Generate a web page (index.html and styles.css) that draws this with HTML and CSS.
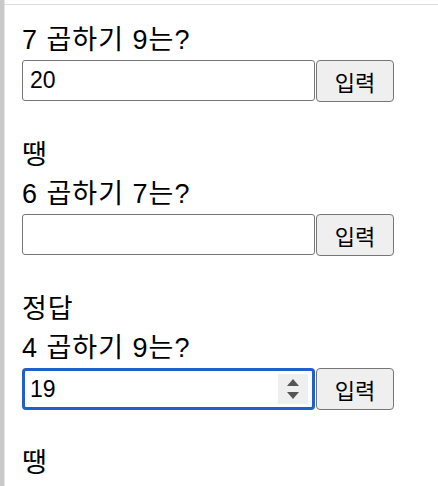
FILE: index.html
```html
<!DOCTYPE html>
<html lang="ko">

<head>
    <meta charset="UTF-8">
    <title>구구단</title>
    <link rel="stylesheet" href="styles.css">
</head>

<body>
    <div class="frame">
        <div class="quiz">
            <div class="question">7 곱하기 9는?</div>
            <form class="row">
                <div class="field"><input type="text" value="20"></div>
                <button type="button">입력</button>
            </form>
        </div>
        <div class="quiz">
            <div class="result">땡</div>
            <div class="question">6 곱하기 7는?</div>
            <form class="row">
                <div class="field"><input type="text" value=""></div>
                <button type="button">입력</button>
            </form>
        </div>
        <div class="quiz">
            <div class="result">정답</div>
            <div class="question">4 곱하기 9는?</div>
            <form class="row">
                <div class="field focused">
                    <input type="text" value="19">
                    <span class="spin">
                        <svg width="14" height="22" viewBox="0 0 14 22">
                            <path d="M7 1 L13 8 L1 8 Z" fill="#555"/>
                            <path d="M1 14 L13 14 L7 21 Z" fill="#555"/>
                        </svg>
                    </span>
                </div>
                <button type="button">입력</button>
            </form>
        </div>
        <div class="quiz">
            <div class="result">땡</div>
        </div>
    </div>
</body>

</html>
```

FILE: styles.css
```css
* {
    margin: 0;
    padding: 0;
    box-sizing: border-box;
}

body {
    font-family: "Liberation Sans", "Noto Sans CJK KR", sans-serif;
    font-size: 27px;
    color: #000;
    background-color: #fff;
    border-left: 4px solid #c9c9c9;
    box-shadow: inset 1px 0 0 #e6e6e6;
    min-height: 100vh;
    overflow: hidden;
}

.frame {
    margin-top: 4px;
    border-top: 1px solid #dcdcdc;
    padding: 16px 0 0 18px;
}

.quiz {
    margin-bottom: 34px;
}

.result,
.question {
    height: 39px;
    line-height: 39px;
    letter-spacing: 1px;
}

.row {
    display: flex;
    align-items: flex-start;
    gap: 1px;
}

.field {
    width: 293px;
    height: 41px;
    border: 1px solid #767676;
    border-radius: 3px;
    display: flex;
    align-items: center;
    padding: 0 6px 0 7px;
    background-color: #fff;
}

.field input {
    flex: 1;
    min-width: 0;
    border: none;
    outline: none;
    font-family: "Liberation Sans", sans-serif;
    font-size: 23px;
    color: #000;
    background: transparent;
}

.field.focused {
    height: 42px;
    border: 3px solid #2060cc;
    border-radius: 4px;
    padding-left: 5px;
    padding-right: 4px;
}

.spin {
    width: 30px;
    height: 30px;
    background-color: #efefef;
    display: flex;
    align-items: center;
    justify-content: center;
}

.row button {
    width: 78px;
    height: 42px;
    border: 1px solid #767676;
    border-radius: 4px;
    background-color: #efefef;
    font-family: "Liberation Sans", "Noto Sans CJK KR", sans-serif;
    font-size: 22px;
    color: #000;
}
```
